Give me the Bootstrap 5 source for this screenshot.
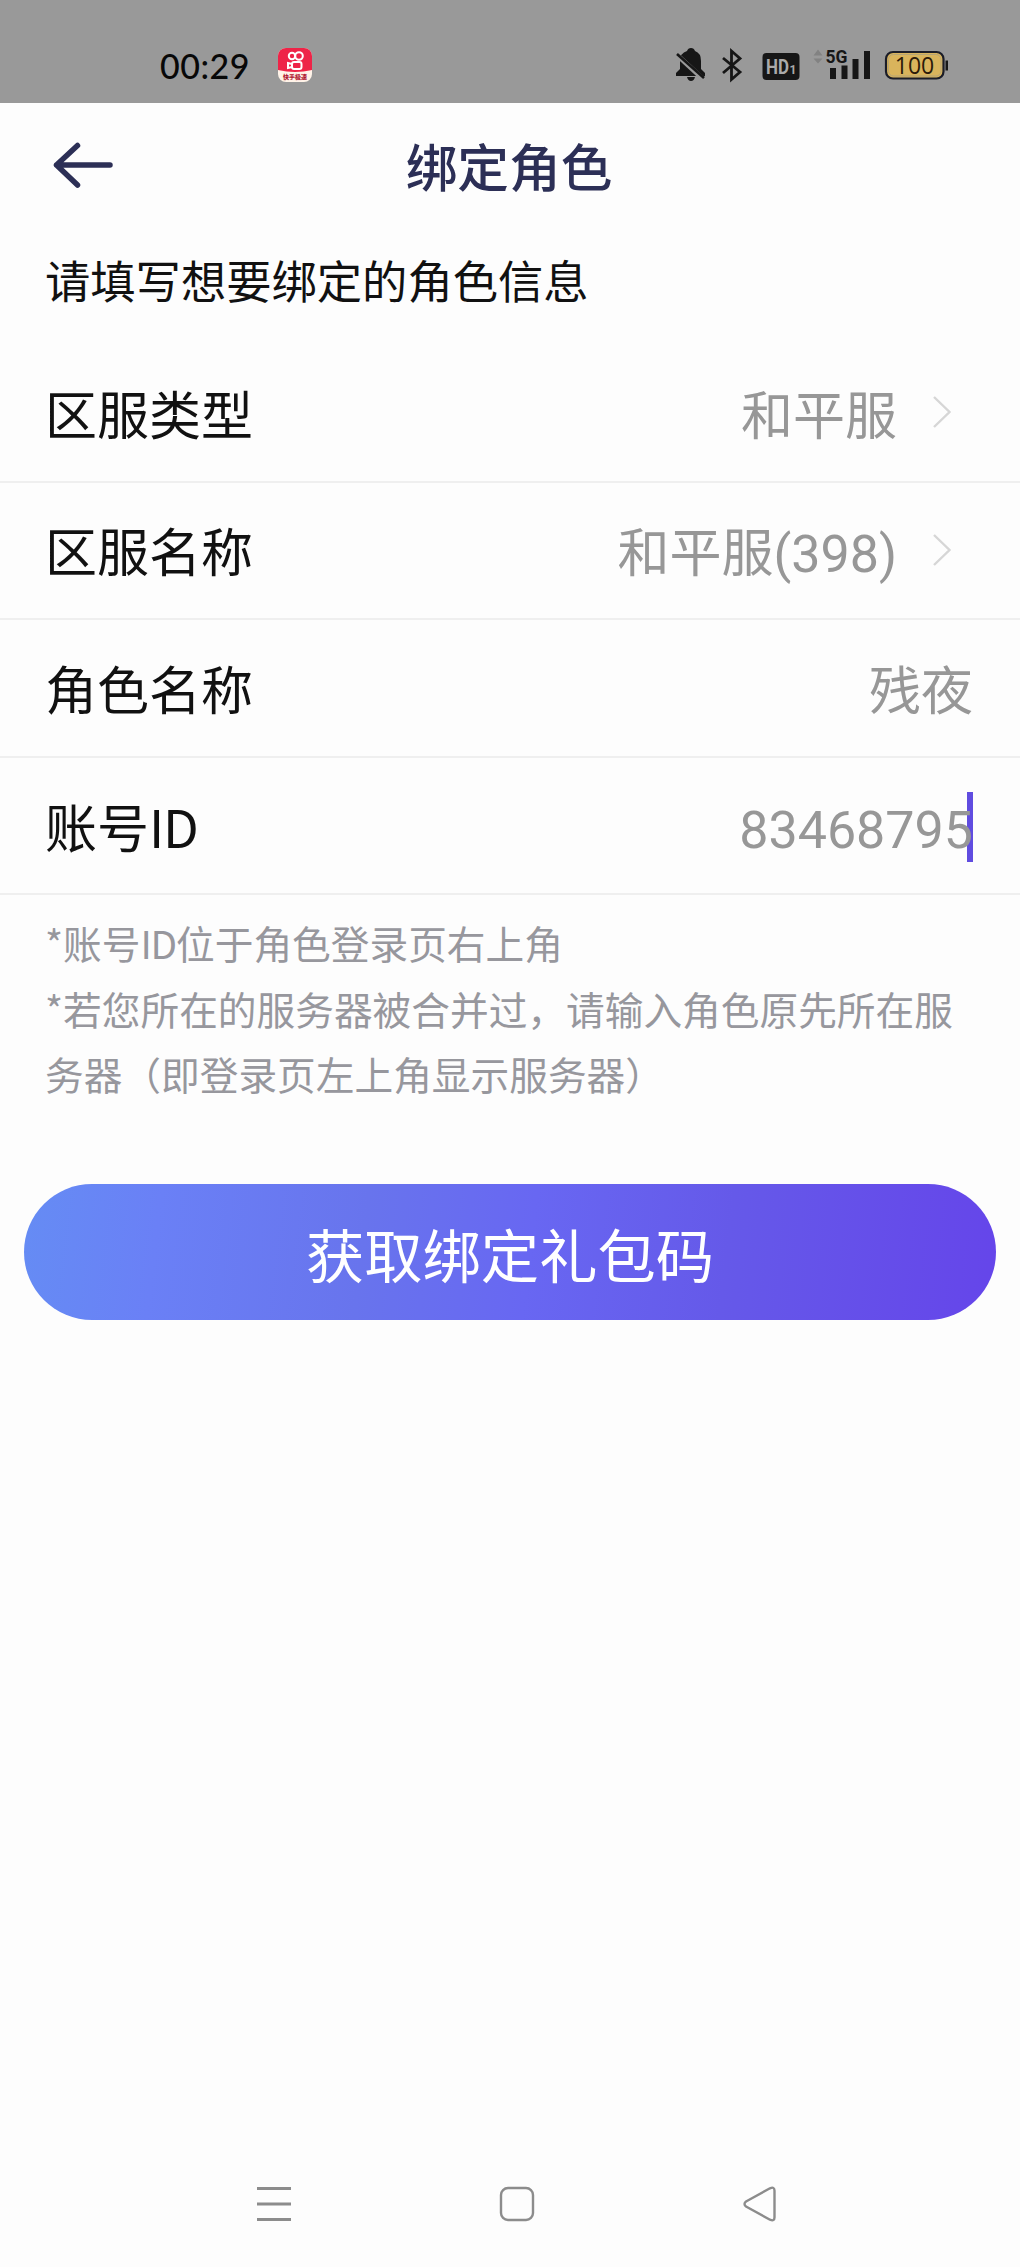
<!DOCTYPE html>
<html lang="zh-CN">
<head>
<meta charset="utf-8">
<meta name="viewport" content="width=device-width, initial-scale=1">
<title>绑定角色</title>
<link href="https://cdn.jsdelivr.net/npm/bootstrap@5.3.0/dist/css/bootstrap.min.css" rel="stylesheet">
<style>
  body { background: #fdfdfd; color: #111; font-family: Roboto, "Noto Sans CJK SC", sans-serif; }
  .screen { width: 1020px; height: 2267px; }
  .status-bar { height: 103px; background: #999; padding: 0 70px 0 160px; }
  .clock { font: 500 34px/1 Lato, sans-serif; letter-spacing: .5px; color: #080808; width: 118px; padding-top: 28px; }
  .status-bar svg { display: block; height: 103px; }
  .title-bar { height: 123px; padding: 0 52px 0 50px; }
  .title-bar h1 { font-size: 51.7px; font-weight: 500; color: #2c2f56; line-height: 1; padding-top: 10px; }
  .side-slot { width: 66px; }
  .prompt { font-size: 45.3px; line-height: 60px; padding: 28px 45px 0; height: 119px; }
  .field { height: 137.6px; padding: 5px 46px 0 45px; border: 0; border-bottom: 2px solid #efefef !important; background: transparent; font-size: 52px; line-height: 72px; border-radius: 0; color: #111; }
  .field-label { font-family: "Noto Sans CJK SC", sans-serif; margin-top: -5px; }
  .latin-tight { letter-spacing: -1.2px; }
  .field-value { color: #979797; padding-top: 5px; margin-right: 1px; }
  .chevron { margin: -6px 22px 0 34px; }
  .caret { right: 0; top: 2px; width: 6px; height: 70px; background: #604ce0; z-index: -1; }
  .account { z-index: 0; }
  .notes { padding: 15px 46px 0 45px; font-family: "Noto Sans CJK SC", sans-serif; font-size: 38.7px; line-height: 65.3px; color: #97979d; height: 289px; }
  .get-code { margin: 0 24px; height: 136px; border: 0; color: #fff; font-size: 58.3px; line-height: 1; padding: 1px 0 0; font-family: "Noto Sans CJK SC", sans-serif;
    background: linear-gradient(97deg, #658cf4 0%, #6a80f6 14%, #6874ed 35%, #6867f2 52%, #6559e9 72%, #6545ea 100%); }
  .nav-keys { height: 126px; padding: 0 242px 0 256px; }
</style>
</head>
<body>
<div class="screen d-flex flex-column overflow-hidden">
  <header class="status-bar d-flex align-items-center flex-shrink-0">
    <div class="clock">00:29</div>
    <svg width="34" viewBox="278 0 34 103" aria-hidden="true">
      <rect x="278" y="48" width="34" height="34" rx="8" fill="#fff3e8"/>
      <path d="M278 70V56a8 8 0 0 1 8-8h18a8 8 0 0 1 8 8v14q-17 4-34 0z" fill="#ee2448"/>
      <g fill="none" stroke="#fff" stroke-width="2">
        <circle cx="292" cy="56" r="3.2"/><circle cx="299" cy="56" r="3.8"/>
        <rect x="292" y="62" width="9.500" height="7" rx="2"/><path d="M292 64l-4-1v5l4-1"/>
      </g>
      <text x="295" y="79" font-family="Noto Sans CJK SC" font-size="6" font-weight="900" text-anchor="middle" fill="#b01832">快手极速</text>
    </svg>
    <svg class="ms-auto" width="278" viewBox="673 0 278 103" fill="#161616">
      <path d="M677 76v-3l4-4V61q0-8 7-10q1-3 4-3t4 3q6 2 6 10v8l4 4v3z"/>
      <path d="M688 77h8q-1 4-4 4t-4-4z"/>
      <path d="M678 55l26 24" stroke="#999" stroke-width="5"/>
      <path d="M678 54l27 24" stroke="#161616" stroke-width="2.600"/>
      <path d="M724 58l17 14-8.500 7.500V51l8.500 7.500-17 14.500" fill="none" stroke="#161616" stroke-width="2.800"/>
      <rect x="763.500" y="53" width="37" height="27" rx="4"/>
      <text x="767" y="73.500" font-family="Roboto" font-size="20" font-weight="700" fill="#aaa" textLength="23" lengthAdjust="spacingAndGlyphs">HD</text>
      <text x="790.500" y="73.500" font-family="Roboto" font-size="12" font-weight="700" fill="#aaa">1</text>
      <path d="M814.500 55.500l4.500-6 4.500 6zM814.500 58.500l4.500 5 4.500-5z" fill="#828282"/>
      <text x="826.500" y="63" font-family="Roboto" font-size="18.500" font-weight="700" textLength="22" lengthAdjust="spacingAndGlyphs">5G</text>
      <path d="M831 68h6v11h-6zM842.500 65.500h6V79h-6zM853.500 59h6v20h-6zM865 51h6v28h-6z"/>
      <rect x="887" y="52" width="57.500" height="26.500" rx="7" fill="#d9b45c" stroke="#1b1d28" stroke-width="2.200"/>
      <rect x="889.500" y="54.500" width="52.500" height="21.500" rx="5" fill="none" stroke="#b5a477" stroke-width="1"/>
      <path d="M946.500 60.500h2.500v10h-2.500z"/>
      <text x="915.500" y="73.500" font-family="Open Sans" font-size="23" text-anchor="middle" fill="#2b1a0a">100</text>
    </svg>
  </header>

  <nav class="title-bar d-flex align-items-center justify-content-between flex-shrink-0">
    <svg class="side-slot" height="60" viewBox="0 0 66 60" fill="none" stroke="#2c2f56" stroke-width="5.500" stroke-linecap="round" stroke-linejoin="round"><path d="M60 30H6.500M27.500 10.500L6.500 30l21 20"/></svg>
    <h1 class="mb-0">绑定角色</h1>
    <span class="side-slot"></span>
  </nav>

  <p class="prompt mb-0 flex-shrink-0">请填写想要绑定的角色信息</p>

  <ul class="list-group list-group-flush flex-shrink-0">
    <li class="list-group-item field d-flex align-items-center">
      <span class="field-label">区服类型</span>
      <span class="field-value ms-auto">和平服</span>
      <svg class="chevron" width="20" height="34" viewBox="0 0 20 34" fill="none" stroke="#d6d6d6" stroke-width="2.400"><path d="M2 2l15.500 15L2 32"/></svg>
    </li>
    <li class="list-group-item field d-flex align-items-center">
      <span class="field-label">区服名称</span>
      <span class="field-value ms-auto">和平服(398)</span>
      <svg class="chevron" width="20" height="34" viewBox="0 0 20 34" fill="none" stroke="#d6d6d6" stroke-width="2.400"><path d="M2 2l15.500 15L2 32"/></svg>
    </li>
    <li class="list-group-item field d-flex align-items-center">
      <span class="field-label">角色名称</span>
      <span class="field-value ms-auto">残夜</span>
    </li>
    <li class="list-group-item field d-flex align-items-center">
      <span class="field-label">账号<span class="latin-tight">ID</span></span>
      <span class="field-value account ms-auto position-relative">83468795<i class="caret position-absolute"></i></span>
    </li>
  </ul>

  <div class="notes flex-shrink-0">
    <div>*账号<span class="latin-tight">ID</span>位于角色登录页右上角</div>
    <div>*若您所在的服务器被合并过，请输入角色原先所在服务器（即登录页左上角显示服务器）</div>
  </div>

  <button type="button" class="btn rounded-pill get-code flex-shrink-0">获取绑定礼包码</button>

  <footer class="nav-keys mt-auto d-flex justify-content-between align-items-center flex-shrink-0">
    <svg width="36" height="36" viewBox="0 0 36 36" stroke="#8c8c8c" stroke-width="2.800"><path d="M1 2.500h34M1 18h34M1 33.500h34"/></svg>
    <svg width="36" height="36" viewBox="0 0 36 36" fill="none" stroke="#8c8c8c" stroke-width="2.400"><rect x="2" y="2" width="32" height="32" rx="7"/></svg>
    <svg width="36" height="36" viewBox="0 0 36 36" fill="none" stroke="#8c8c8c" stroke-width="2.400" stroke-linejoin="round"><path d="M4 15.500L28 2.300q4.500-2 4.500 2.500v26.400q0 4.500-4.500 2.500L4 20.500q-3-2.500 0-5z"/></svg>
  </footer>
</div>
<script src="https://cdn.jsdelivr.net/npm/bootstrap@5.3.0/dist/js/bootstrap.bundle.min.js"></script>
</body>
</html>
